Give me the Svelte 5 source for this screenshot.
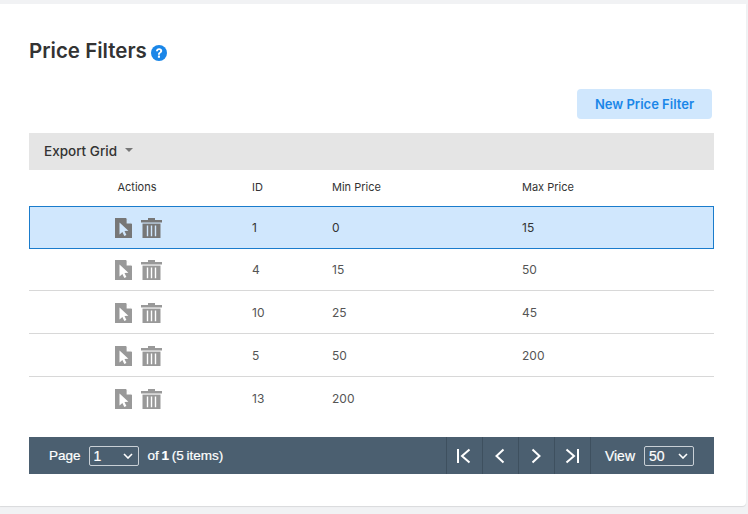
<script>
  const rows = [
    { id: 1, min: 0, max: 15 },
    { id: 4, min: 15, max: 50 },
    { id: 10, min: 25, max: 45 },
    { id: 5, min: 50, max: 200 },
    { id: 13, min: 200, max: '' }
  ];
</script>

<div class="page">
  <div class="card">
    <h1 class="title">
      Price Filters
      <svg class="help" viewBox="0 0 16 16" width="16" height="16">
        <circle cx="8" cy="8" r="8" fill="#1a86e8" />
        <path d="M5 6.2 C5 4.3 6.4 3.2 8.1 3.2 C9.9 3.2 11.2 4.3 11.2 5.8 C11.2 7.1 10.5 7.7 9.6 8.3 C9 8.7 8.9 9 8.9 9.7 L7 9.7 C7 8.5 7.3 7.9 8.2 7.3 C8.9 6.8 9.2 6.5 9.2 6 C9.2 5.4 8.7 5 8.1 5 C7.4 5 7 5.5 7 6.2 Z" fill="#fff" />
        <rect x="6.9" y="10.6" width="2.1" height="2.1" rx="0.3" fill="#fff" />
      </svg>
    </h1>

    <div class="actions">
      <button class="new-btn">New Price Filter</button>
    </div>

    <div class="toolbar">
      <span>Export Grid</span>
      <span class="caret"></span>
    </div>

    <div class="grid">
      <div class="row head">
        <div class="c-actions">Actions</div>
        <div>ID</div>
        <div>Min Price</div>
        <div>Max Price</div>
      </div>
      {#each rows as row, i}
        <div class="row item" class:selected={i === 0}>
          <div class="c-actions icons">
            <svg viewBox="0 0 17 20" width="17" height="20">
              <path class="ico" d="M0 0 H11 L17 6 V20 H0 Z" />
              <path class="cut" d="M11.6 0 L17 5.4 H11.6 Z" />
              <path class="cut" d="M4.5 4.5 L4.5 16.5 L7.4 13.9 L9.3 18 L11.4 17 L9.5 13 L13.4 12.7 Z" />
            </svg>
            <svg viewBox="0 0 21 20" width="21" height="20">
              <path class="ico" d="M7 0 H14 V2 H21 V4.6 H0 V2 H7 Z" />
              <path class="ico" d="M1.5 5.6 H19.5 V20 H1.5 Z" />
              <path class="cut" d="M5.8 7.4 H7.2 V18.2 H5.8 Z M9.8 7.4 H11.2 V18.2 H9.8 Z M13.8 7.4 H15.2 V18.2 H13.8 Z" />
            </svg>
          </div>
          <div>{row.id}</div>
          <div>{row.min}</div>
          <div>{row.max}</div>
        </div>
      {/each}
    </div>

    <div class="pager">
      <div class="pager-left">
        <span class="page-label">Page</span>
        <select class="sel sel-page"><option>1</option></select>
        <span class="count">of <b>1</b> (5 items)</span>
      </div>
      <div class="pager-right">
        <button class="nav" aria-label="First">
          <svg viewBox="0 0 16 16" width="16" height="16"><path d="M2 1 V15 M13.5 1.5 L6 8 L13.5 14.5" /></svg>
        </button>
        <button class="nav" aria-label="Previous">
          <svg viewBox="0 0 16 16" width="16" height="16"><path d="M11.5 1.5 L4.5 8 L11.5 14.5" /></svg>
        </button>
        <button class="nav" aria-label="Next">
          <svg viewBox="0 0 16 16" width="16" height="16"><path d="M4.5 1.5 L11.5 8 L4.5 14.5" /></svg>
        </button>
        <button class="nav last" aria-label="Last">
          <svg viewBox="0 0 16 16" width="16" height="16"><path d="M14 1 V15 M2.5 1.5 L10 8 L2.5 14.5" /></svg>
        </button>
        <span class="view">View</span>
        <select class="sel sel-view"><option>50</option></select>
      </div>
    </div>
  </div>
</div>

<style>
  :global(body) {
    background: #f1f2f4;
  }

  .page {
    height: 514px;
    padding-top: 4px;
    box-sizing: border-box;
    overflow: hidden;
    font-family: "Inter", "Liberation Sans", sans-serif;
    color: #333;
  }

  .card {
    width: 746px;
    height: 502px;
    box-sizing: border-box;
    padding: 31px 32px 0 29px;
    background: #fff;
    border-radius: 0 0 4px 0;
    box-shadow: 0 1px 1px rgba(0, 0, 0, 0.1);
  }

  .title {
    display: flex;
    align-items: center;
    gap: 4px;
    height: 30px;
    margin: 0;
    font-size: 20.5px;
    font-weight: 600;
    color: #333;
  }

  .help {
    margin-top: 5px;
  }

  .actions {
    display: flex;
    justify-content: flex-end;
    padding: 24px 2px 14px 0;
  }

  .new-btn {
    width: 135px;
    height: 30px;
    border: 0;
    border-radius: 4px;
    background: #d0e7fd;
    color: #1a86e8;
    font: 600 13px "Inter", "Liberation Sans", sans-serif;
  }

  .toolbar {
    display: flex;
    align-items: center;
    gap: 8px;
    height: 37px;
    box-sizing: border-box;
    padding: 0 0 2px 15px;
    background: #e5e5e5;
    font-size: 13.5px;
    font-weight: 500;
    color: #333;
  }

  .caret {
    width: 0;
    height: 0;
    margin-top: -2px;
    border-left: 4.5px solid transparent;
    border-right: 4.5px solid transparent;
    border-top: 4.5px solid #777;
  }

  .row {
    display: grid;
    grid-template-columns: 223px 80px 190px 1fr;
    align-items: center;
    font-size: 12px;
  }

  .head {
    height: 36px;
    box-sizing: border-box;
    padding-bottom: 2px;
    font-size: 11px;
    color: #333;
  }

  .item {
    --cut: #fff;
    height: 43px;
    box-sizing: border-box;
    border-top: 1px solid #d8d8d8;
    color: #555;
  }

  .selected {
    --cut: #d0e7fd;
    background: #d0e7fd;
    border: 1px solid #1a7ccc;
    color: #333;
    margin-bottom: -1px;
    position: relative;
  }

  .selected + .item {
    height: 42px;
    border-top-color: transparent;
  }

  .c-actions {
    text-align: center;
    width: 216px;
  }

  .icons {
    display: flex;
    justify-content: center;
    gap: 9px;
    color: #999;
    width: 219px;
  }

  .item:nth-child(n + 4) .icons {
    padding-top: 2px;
  }

  .ico {
    fill: currentColor;
  }

  .cut {
    fill: var(--cut);
  }

  .selected .icons {
    color: #777;
    width: 217px;
  }

  .selected > div:not(.icons) {
    margin-left: -1px;
  }

  .pager {
    display: flex;
    justify-content: space-between;
    height: 37px;
    margin-top: 18px;
    background: #4b5f70;
    color: #fff;
    font: 13.5px "Liberation Sans", sans-serif;
    -webkit-text-stroke: 0.2px #fff;
  }

  .pager-left {
    display: flex;
    align-items: center;
    padding-left: 20px;
    gap: 9px;
  }

  .page-label {
    margin-right: -1px;
  }

  .count {
    word-spacing: -1px;
  }

  .pager-right {
    display: flex;
    align-items: center;
    padding-right: 20px;
  }

  .sel {
    appearance: none;
    height: 20px;
    padding: 0 0 0 4px;
    border: 1px solid #c9d0d6;
    border-radius: 2px;
    color: #fff;
    font: 14px "Liberation Sans", sans-serif;
    background-color: transparent;
    background-image: url("data:image/svg+xml,%3Csvg xmlns='http://www.w3.org/2000/svg' width='10' height='6'%3E%3Cpath d='M1 1 L5 5 L9 1' fill='none' stroke='%23fff' stroke-width='1.6'/%3E%3C/svg%3E");
    background-repeat: no-repeat;
    background-position: right 5px center;
  }

  .sel-page {
    width: 50px;
  }

  .sel-view {
    width: 50px;
  }

  .nav {
    display: flex;
    align-items: center;
    justify-content: center;
    width: 36px;
    height: 37px;
    padding: 0;
    background: transparent;
    border: 0;
    border-left: 1px solid #3e505f;
  }

  .nav.last {
    border-right: 1px solid #3e505f;
    width: 37px;
  }

  .nav svg path {
    fill: none;
    stroke: #fff;
    stroke-width: 2;
  }

  .view {
    margin: 0 9px 0 14px;
    font-size: 14px;
  }
</style>
